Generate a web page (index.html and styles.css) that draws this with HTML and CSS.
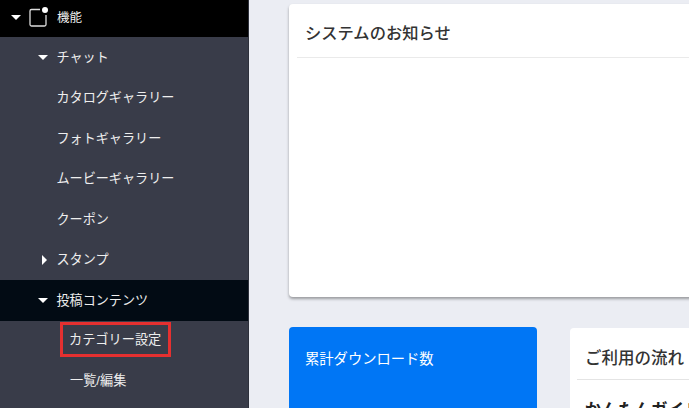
FILE: index.html
```html
<!DOCTYPE html>
<html>
<head>
    <title>Dashboard</title>
    <meta name="viewport" content="width=device-width, initial-scale=1">
    <link rel="stylesheet" href="styles.css">
</head>
<body>
    <div class="sidebar">
        <div class="menu-head">
            <span class="arrow-down"></span>
            <svg class="menu-icon" width="20" height="22" viewBox="0 0 20 22">
                <path d="M11 3.500H2.500a1.500 1.500 0 0 0-1.500 1.500V18.500a1.500 1.500 0 0 0 1.500 1.500H15.500a1.500 1.500 0 0 0 1.500-1.500V9" fill="none" stroke="#dddddd" stroke-width="1.300"/>
                <circle cx="16" cy="4" r="3" fill="#ffffff"/>
            </svg>
            <span class="head-label">機能</span>
        </div>
        <div class="menu-item"><span class="arrow-down"></span>チャット</div>
        <div class="menu-item">カタログギャラリー</div>
        <div class="menu-item">フォトギャラリー</div>
        <div class="menu-item">ムービーギャラリー</div>
        <div class="menu-item">クーポン</div>
        <div class="menu-item"><span class="arrow-right"></span>スタンプ</div>
        <div class="menu-item active"><span class="arrow-down"></span>投稿コンテンツ</div>
        <div class="menu-item sub"><span class="highlight">カテゴリー設定</span></div>
        <div class="menu-item sub"><span class="sub-label">一覧/編集</span></div>
    </div>

    <div class="main">
        <div class="card notice">
            <h2>システムのお知らせ</h2>
        </div>
        <div class="bottom-row">
            <div class="download-card">累計ダウンロード数</div>
            <div class="card flow">
                <h2>ご利用の流れ</h2>
                <h3>かんたんガイド</h3>
            </div>
        </div>
    </div>
</body>
</html>
```

FILE: styles.css
```css
* {
    box-sizing: border-box;
}

body {
    display: flex;
    width: 689px;
    height: 408px;
    margin: 0;
    overflow: hidden;
    background-color: #ebedf3;
    font-family: "Liberation Sans", "Noto Sans CJK JP", sans-serif;
}

.sidebar {
    flex: none;
    width: 249px;
    height: 408px;
    overflow: hidden;
    background-color: #393c49;
    border-right: 1px solid #2e313c;
    color: #eeeeee;
}

.menu-head {
    display: flex;
    align-items: center;
    height: 37px;
    padding-left: 11px;
    background-color: #000000;
    font-size: 12.500px;
    line-height: 1;
}

.menu-icon {
    margin-left: 8px;
    margin-top: -4px;
}

.head-label {
    margin-left: 8px;
    margin-top: -1px;
}

.menu-item {
    position: relative;
    display: flex;
    align-items: center;
    height: 40.500px;
    padding-left: 56.500px;
    padding-bottom: 2px;
    font-size: 13.100px;
}

.menu-item.active {
    background-color: #020b14;
}

.menu-item.sub {
    padding-left: 70px;
    padding-bottom: 3px;
    font-size: 13.200px;
}

.arrow-down {
    width: 0;
    height: 0;
    margin-top: -2px;
    border-left: 5px solid transparent;
    border-right: 5px solid transparent;
    border-top: 5px solid #ffffff;
}

.menu-item .arrow-down {
    position: absolute;
    left: 38px;
    top: 20px;
}

.arrow-right {
    position: absolute;
    left: 42px;
    top: 15px;
    width: 0;
    height: 0;
    border-top: 5px solid transparent;
    border-bottom: 5px solid transparent;
    border-left: 5px solid #ffffff;
}

.highlight {
    margin-left: -10px;
    margin-top: 1px;
    padding: 4px 7px 6px 6px;
    border: 3px solid #e53030;
    white-space: nowrap;
}

.main {
    flex: none;
    width: 900px;
    padding: 4px 0 0 40px;
}

.card {
    background-color: #ffffff;
    border-radius: 4px;
}

.card h2 {
    margin: 0;
    font-weight: 500;
    color: #333333;
}

.notice {
    height: 293px;
    padding: 0 0 0 8px;
    box-shadow: 0 2px 3px rgba(0, 0, 0, 0.35);
}

.notice h2 {
    height: 54px;
    padding: 16px 0 0 8px;
    border-bottom: 1px solid #eaeaea;
    font-size: 16.300px;
}

.bottom-row {
    display: flex;
    gap: 33px;
    margin-top: 30px;
}

.download-card {
    width: 248px;
    height: 120px;
    padding: 20px 16px;
    background-color: #0076f5;
    border-radius: 4px;
    color: #ffffff;
    font-size: 14.300px;
}

.flow {
    flex: 1;
    height: 120px;
    margin-top: 1px;
    padding-left: 7px;
}

.flow h2 {
    height: 52px;
    padding: 17px 0 0 8px;
    border-bottom: 1px solid #e4e4e4;
    font-size: 16.500px;
}

.flow h3 {
    margin: 17px 0 0 8px;
    font-size: 16.500px;
    font-weight: 700;
    color: #222222;
}
```
